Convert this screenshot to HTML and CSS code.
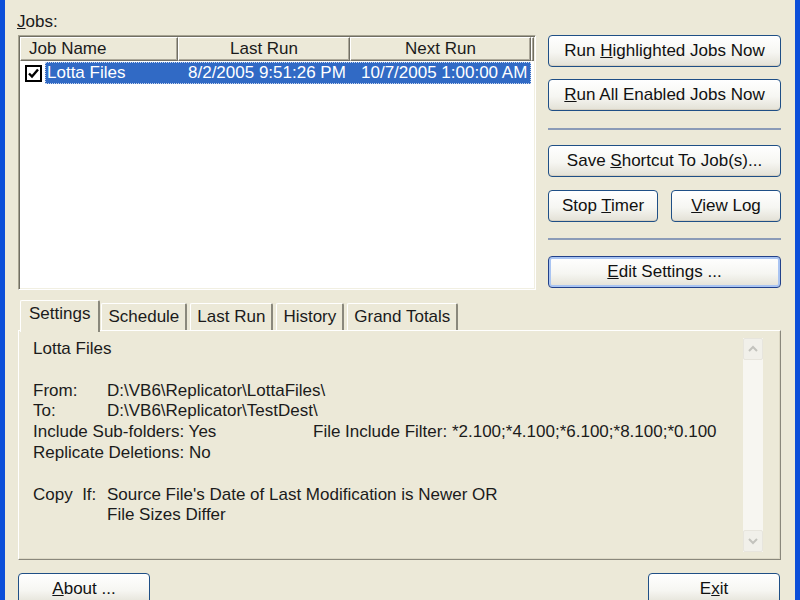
FILE: index.html
```html
<!DOCTYPE html>
<html lang="en">

<head>
    <meta charset="UTF-8">
    <title>Replicator</title>
    <link rel="stylesheet" href="styles.css">
</head>

<body>
    <div class="window">
        <!-- Jobs list + action buttons -->
        <div class="top">
            <div class="jobs">
                <div class="caption"><u>J</u>obs:</div>
                <div class="listview">
                    <div class="lv-head">
                        <div class="hcol h1">Job Name</div>
                        <div class="hcol h2">Last Run</div>
                        <div class="hcol h3">Next Run</div>
                        <div class="hcol h4"></div>
                    </div>
                    <div class="lv-row">
                        <span class="check">
                            <svg width="17" height="17" viewBox="0 0 17 17">
                                <rect x="1" y="1" width="15" height="15" fill="#fff" stroke="#000" stroke-width="2"/>
                                <polyline points="4,8.5 7,11.5 13,4.5" fill="none" stroke="#000" stroke-width="2.4"/>
                            </svg>
                        </span>
                        <div class="sel">
                            <span class="cell c1">Lotta Files</span>
                            <span class="cell c2">8/2/2005 9:51:26 PM</span>
                            <span class="cell c3">10/7/2005 1:00:00 AM</span>
                        </div>
                    </div>
                </div>
            </div>

            <div class="actions">
                <button class="btn">Run <u>H</u>ighlighted Jobs Now</button>
                <button class="btn gap"><u>R</u>un All Enabled Jobs Now</button>
                <div class="sep first"></div>
                <button class="btn">Save <u>S</u>hortcut To Job(s)...</button>
                <div class="pair">
                    <button class="btn stop">Stop <u>T</u>imer</button>
                    <button class="btn log"><u>V</u>iew Log</button>
                </div>
                <div class="sep second"></div>
                <button class="btn default"><u>E</u>dit Settings ...</button>
            </div>
        </div>

        <!-- Tabs -->
        <div class="tabs">
            <div class="tab active">Settings</div>
            <div class="tab">Schedule</div>
            <div class="tab">Last Run</div>
            <div class="tab">History</div>
            <div class="tab">Grand Totals</div>
        </div>
        <div class="panel">
            <div class="details">
                <div class="line">Lotta Files</div>
                <div class="line"></div>
                <div class="line"><span class="key">From:</span>D:\VB6\Replicator\LottaFiles\</div>
                <div class="line"><span class="key">To:</span>D:\VB6\Replicator\TestDest\</div>
                <div class="line"><span class="half">Include Sub-folders: Yes</span>File Include Filter: *2.100;*4.100;*6.100;*8.100;*0.100</div>
                <div class="line">Replicate Deletions: No</div>
                <div class="line"></div>
                <div class="line"><span class="key">Copy&nbsp;&nbsp;If:</span>Source File's Date of Last Modification is Newer OR</div>
                <div class="line"><span class="key"></span>File Sizes Differ</div>
            </div>
            <div class="vscroll">
                <div class="arrow">
                    <svg width="12" height="8" viewBox="0 0 12 8"><polyline points="2,6 6,2 10,6" fill="none" stroke="#c3c3bd" stroke-width="2"/></svg>
                </div>
                <div class="track"></div>
                <div class="arrow">
                    <svg width="12" height="8" viewBox="0 0 12 8"><polyline points="2,2 6,6 10,2" fill="none" stroke="#c3c3bd" stroke-width="2"/></svg>
                </div>
            </div>
        </div>

        <!-- Bottom buttons -->
        <div class="bottom">
            <button class="btn wide"><u>A</u>bout ...</button>
            <button class="btn wide">E<u>x</u>it</button>
        </div>
    </div>
</body>

</html>
```

FILE: styles.css
```css
body {
    margin: 0;
    font-family: "Liberation Sans", Arial, sans-serif;
    font-size: 17px;
    color: #1b1b1b;
    background-color: #ece9d8;
}

.window {
    height: 600px;
    box-sizing: border-box;
    overflow: hidden;
    padding: 11px 14px 0 13px;
    border-left: 5px solid #0b4fd9;
    border-right: 5px solid #0b4fd9;
    background-color: #ece9d8;
}

.top {
    display: flex;
    align-items: flex-start;
    gap: 12px;
}

.caption {
    height: 22px;
    line-height: 22px;
    margin-bottom: 2px;
    margin-left: -1px;
}

/* List view */
.listview {
    width: 518px;
    height: 255px;
    box-sizing: border-box;
    background-color: #fff;
    border: 1px solid;
    border-color: #a7a492 #fff #fff #a7a492;
    box-shadow: inset 1px 1px 0 #716f64, inset -1px -1px 0 #f1efe2;
    padding: 1px;
}

.lv-head {
    display: flex;
    height: 24px;
}

.hcol {
    box-sizing: border-box;
    height: 24px;
    line-height: 22px;
    text-align: center;
    background-color: #ece9d8;
    border: 1px solid;
    border-color: #fff #716f64 #716f64 #fff;
    box-shadow: inset -1px -1px 0 #aca899;
}

.h1 {
    width: 158px;
    text-align: left;
    padding-left: 8px;
}

.h2 {
    width: 172px;
}

.h3 {
    width: 181px;
}

.h4 {
    flex: 1;
}

.lv-row {
    display: flex;
    align-items: center;
    height: 22px;
    margin-top: 1px;
}

.check {
    width: 17px;
    height: 17px;
    margin-left: 5px;
    margin-right: 3px;
}

.check svg {
    display: block;
}

.sel {
    display: flex;
    height: 22px;
    line-height: 20px;
    background-color: #316ac5;
    color: #fff;
    border: 1px dotted #c9d7ee;
    box-sizing: border-box;
}

.cell {
    white-space: nowrap;
}

.c1 {
    width: 131px;
    padding-left: 1px;
}

.c2 {
    width: 162px;
    padding-left: 10px;
}

.c3 {
    width: 169px;
    padding-left: 11px;
}

/* Buttons */
.actions {
    width: 233px;
    margin-top: 24px;
    display: flex;
    flex-direction: column;
}

.btn {
    flex-shrink: 0;
    font-family: inherit;
    font-size: 17px;
    color: #111;
    height: 32px;
    padding: 0;
    box-sizing: border-box;
    border: 1px solid #1f4f86;
    border-radius: 4px;
    background: linear-gradient(#ffffff, #f6f6f2 55%, #e3e1d6);
    box-shadow: inset 0 -1px 0 #d6d0c2;
    white-space: nowrap;
}

.actions .btn {
    width: 233px;
}

.btn.gap {
    margin-top: 12px;
}

.sep {
    height: 0;
    border-top: 2px solid #8b9bb7;
}

.sep.first {
    margin: 17px 0 15px;
}

.sep.second {
    margin: 16px 0 16px;
}

.pair {
    display: flex;
    justify-content: space-between;
    margin-top: 13px;
}

.actions .pair .stop {
    width: 110px;
}

.actions .pair .log {
    width: 110px;
}

.btn.default {
    border: 1px solid #22418a;
    box-shadow: inset 0 0 0 2px #a9c4f2, inset 0 -1px 0 #d6d0c2;
}

/* Tabs */
.tabs {
    display: flex;
    align-items: flex-end;
    height: 30px;
    margin-top: 10px;
    padding-left: 2px;
    position: relative;
    z-index: 1;
}

.tab {
    height: 27px;
    line-height: 26px;
    box-sizing: border-box;
    padding: 0 6px;
    margin-right: 3px;
    border-top: 1px solid #fff;
    border-left: 1px solid #fff;
    border-right: 2px solid #8a887c;
    border-radius: 2px 2px 0 0;
}

.tab.active {
    height: 32px;
    line-height: 26px;
    margin-bottom: -2px;
    padding: 0 8px;
    margin-right: 1px;
    background-color: #ece9d8;
}

.panel {
    display: flex;
    height: 230px;
    box-sizing: border-box;
    border: 1px solid;
    border-color: #fff #8a887c #8a887c #fff;
    box-shadow: -1px -1px 0 #ddd9c6 inset;
}

.details {
    flex: 1;
    padding: 8px 0 0 14px;
}

.line {
    height: 20.8px;
    line-height: 20.8px;
    white-space: nowrap;
}

.key {
    display: inline-block;
    width: 74px;
}

.half {
    display: inline-block;
    width: 280px;
}

/* Disabled scrollbar */
.vscroll {
    width: 20px;
    margin: 7px 17px 7px 0;
    display: flex;
    flex-direction: column;
    background-color: #f7f6f1;
}

.arrow {
    height: 22px;
    display: flex;
    align-items: center;
    justify-content: center;
    box-sizing: border-box;
    border: 1px solid #e7e5dd;
    border-radius: 2px;
    background-color: #f1f0ea;
}

.track {
    flex: 1;
}

.bottom {
    display: flex;
    justify-content: space-between;
    margin-top: 13px;
    padding-right: 1px;
}

.btn.wide {
    width: 132px;
}
```
